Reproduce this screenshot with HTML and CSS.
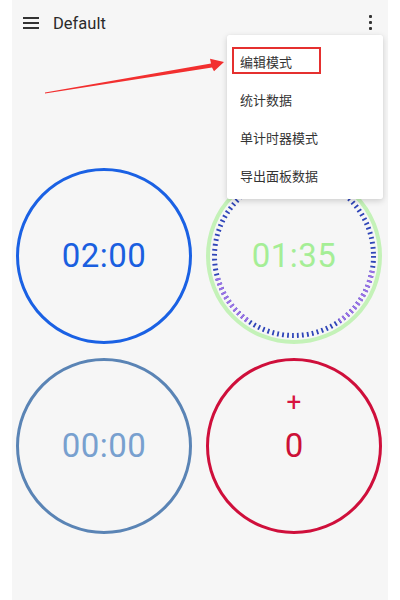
FILE: index.html
```html
<!DOCTYPE html>
<html lang="zh">
<head>
<meta charset="utf-8">
<title>Default</title>
<link rel="stylesheet" href="styles.css">
</head>
<body>
<div class="app">
  <header class="topbar">
    <span class="menu-icon"><i></i><i></i><i></i></span>
    <span class="title">Default</span>
    <span class="kebab"><i></i><i></i><i></i></span>
  </header>
  <main class="grid">
    <div class="dial dial-blue"><span class="time">02:00</span></div>
    <div class="dial dial-green">
      <svg class="ticks" viewBox="0 0 176 176" width="176" height="176">
        <defs>
          <clipPath id="purpleA"><path d="M88 88 L186.5 105.4 L145.4 169.9 Z"/></clipPath>
          <clipPath id="purpleB"><path d="M88 88 L30.6 169.9 L-8.6 113.9 Z"/></clipPath>
        </defs>
        <circle cx="88" cy="88" r="86" fill="none" stroke="#c4f2b8" stroke-width="4"/>
        <circle cx="88" cy="88" r="79.5" fill="none" stroke="#2f45b8" stroke-width="5" stroke-dasharray="1.8 3.195"/>
        <circle cx="88" cy="88" r="79.5" fill="none" stroke="#9d6fe6" stroke-width="5" stroke-dasharray="1.8 3.195" clip-path="url(#purpleA)"/>
        <circle cx="88" cy="88" r="79.5" fill="none" stroke="#9d6fe6" stroke-width="5" stroke-dasharray="1.8 3.195" clip-path="url(#purpleB)"/>
      </svg>
      <span class="time time-green">01:35</span>
    </div>
    <div class="dial dial-steel"><span class="time time-steel">00:00</span></div>
    <div class="dial dial-red">
      <span class="plus">+</span>
      <span class="count">0</span>
      <span class="spacer"></span>
    </div>
  </main>
  <nav class="popup">
    <div class="item first">编辑模式<span class="highlight"></span></div>
    <div class="item">统计数据</div>
    <div class="item">单计时器模式</div>
    <div class="item">导出面板数据</div>
  </nav>
</div>
<svg class="arrow" viewBox="0 0 400 600" width="400" height="600">
  <polygon points="45,92.6 211,63.6 210,58.8 224,62 214,71.2 212,67.6 45,93.6" fill="#f22f2f"/>
</svg>
</body>
</html>
```

FILE: styles.css
```css
html, body {
  margin: 0;
  padding: 0;
  background: #ffffff;
}
body {
  position: relative;
  width: 400px;
  height: 600px;
  overflow: hidden;
  font-family: Roboto, "Noto Sans", "Noto Sans CJK SC", sans-serif;
}
.app {
  position: relative;
  margin-left: 12px;
  width: 376px;
  height: 600px;
  background: #f6f6f6;
}
.topbar {
  height: 46px;
  display: flex;
  align-items: center;
  padding: 0 16px 0 11px;
  box-sizing: border-box;
}
.menu-icon {
  display: flex;
  flex-direction: column;
  gap: 3px;
  width: 16px;
}
.menu-icon i {
  display: block;
  height: 2px;
  background: #333;
}
.title {
  margin-left: 14px;
  font-size: 16.5px;
  font-weight: 400;
  color: #2b2b2b;
  flex: 1;
}
.kebab {
  display: flex;
  flex-direction: column;
  gap: 3px;
  margin-top: -1px;
}
.kebab i {
  display: block;
  width: 3px;
  height: 3px;
  background: #333;
  border-radius: 1px;
}
.grid {
  display: grid;
  grid-template-columns: 176px 176px;
  column-gap: 14px;
  row-gap: 14px;
  padding: 122px 0 0 4px;
}
.dial {
  width: 176px;
  height: 176px;
  box-sizing: border-box;
  border-radius: 50%;
  display: flex;
  flex-direction: column;
  align-items: center;
  justify-content: center;
}
.dial-blue { border: 3px solid #1a61e4; }
.dial-steel { border: 3px solid #5a84b5; }
.dial-red { border: 3px solid #cf0f3b; gap: 12px; }
.dial-green {
  display: grid;
  place-items: center;
}
.dial-green > * { grid-area: 1 / 1; }
.time {
  font-size: 33px;
  line-height: 40px;
  color: #1a5fe0;
  letter-spacing: 0.5px;
}
.time-green { color: #a5ee96; }
.time-steel { color: #78a0cf; }
.plus {
  font-size: 26px;
  line-height: 24px;
  height: 24px;
  color: #d8143f;
}
.count {
  font-size: 33px;
  line-height: 40px;
  color: #cc1037;
}
.spacer { height: 24px; }
.popup {
  position: absolute;
  left: 215px;
  top: 35px;
  width: 156px;
  padding: 8px 0 4px;
  background: #ffffff;
  box-shadow: 0 2px 6px rgba(0, 0, 0, 0.16), 0 0 1px rgba(0, 0, 0, 0.1);
  border-radius: 2px;
}
.item {
  position: relative;
  height: 38px;
  line-height: 38px;
  padding-left: 13px;
  font-family: "Noto Sans CJK SC", sans-serif;
  font-size: 13px;
  color: #333333;
}
.highlight {
  position: absolute;
  left: 5px;
  top: 4px;
  width: 89px;
  height: 27px;
  box-sizing: border-box;
  border: 2px solid #e5302f;
}
.arrow {
  position: absolute;
  left: 0;
  top: 0;
  pointer-events: none;
}
```
